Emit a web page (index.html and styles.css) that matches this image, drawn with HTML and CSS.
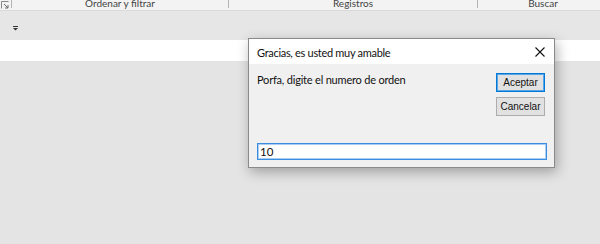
FILE: index.html
```html
<!DOCTYPE html>
<html lang="es">
<head>
<meta charset="utf-8">
<title>Gracias</title>
<link rel="stylesheet" href="styles.css">
</head>
<body>
<div class="app">
  <div class="groups">
    <div class="launcher">
      <svg width="8" height="8" viewBox="0 0 8 8"><path d="M0.5 7.5V0.5H7.5" fill="none" stroke="#8a8a8a" stroke-width="1"/><path d="M3 3L7 7M4 7H7V4" fill="none" stroke="#6d6d6d" stroke-width="1"/></svg>
    </div>
    <div class="sep"></div>
    <div class="group">Ordenar y filtrar</div>
    <div class="sep"></div>
    <div class="group">Registros</div>
    <div class="sep"></div>
    <div class="group">Buscar</div>
  </div>
  <div class="qat">
    <svg class="qat-icon" width="5" height="5" viewBox="0 0 5 5"><path d="M0 0.5H5" stroke="#333" stroke-width="1"/><path d="M0 2H5L2.5 4.5Z" fill="#333"/></svg>
  </div>
  <div class="band"></div>
  <div class="work"></div>

  <div class="dialog">
    <div class="titlebar">
      <span class="title">Gracias, es usted muy amable</span>
      <svg class="close" width="10" height="10" viewBox="0 0 10 10"><path d="M0.5 0.5L9.5 9.5M9.5 0.5L0.5 9.5" stroke="#111" stroke-width="1.1"/></svg>
    </div>
    <div class="body">
      <div class="top">
        <div class="prompt">Porfa, digite el numero de orden</div>
        <div class="buttons">
          <button class="btn default">Aceptar</button>
          <button class="btn">Cancelar</button>
        </div>
      </div>
      <div class="field"><span class="value">10</span></div>
    </div>
  </div>
</div>
</body>
</html>
```
FILE: styles.css
```css
html, body {
  margin: 0;
  padding: 0;
}
body {
  width: 600px;
  height: 244px;
  overflow: hidden;
  font-family: Lato, "Noto Sans", sans-serif;
  background: #e4e4e4;
}
.app {
  position: relative;
  width: 600px;
  height: 244px;
  display: flex;
  flex-direction: column;
}
.groups {
  height: 10px;
  background: #f3f3f3;
  display: grid;
  grid-template-columns: 11px 1px 216px 1px 248px 1px 130px;
  overflow: hidden;
  border-bottom: 1px solid #dadada;
}
.launcher {
  padding: 1px 0 0 1px;
  line-height: 0;
}
.sep {
  background: #b4b4b4;
  height: 8px;
}
.group {
  font-size: 10px;
  line-height: 11px;
  margin-top: -2px;
  color: #444;
  text-align: center;
  white-space: nowrap;
}
.qat {
  height: 29px;
  background: #e6e6e6;
  display: flex;
  align-items: center;
  padding-left: 13px;
}
.qat-icon {
  margin-top: 5px;
}
.band {
  height: 21px;
  background: #ffffff;
}
.work {
  flex: 1;
  background: #e4e4e4;
}
.dialog {
  position: absolute;
  left: 248px;
  top: 38px;
  width: 305px;
  height: 128px;
  border: 1px solid #8a8a8a;
  background: #f0f0f0;
  box-shadow: 2px 4px 12px rgba(0, 0, 0, 0.3);
  display: flex;
  flex-direction: column;
}
.titlebar {
  height: 25px;
  background: #ffffff;
  display: flex;
  align-items: center;
  justify-content: space-between;
  padding: 0 9px 0 8px;
}
.title {
  font-size: 11px;
  letter-spacing: -0.3px;
  color: #111;
  margin-top: 1px;
}
.body {
  flex: 1;
  display: flex;
  flex-direction: column;
  justify-content: space-between;
  padding: 9px 7px 7px 8px;
}
.top {
  display: flex;
  justify-content: space-between;
  align-items: flex-start;
}
.prompt {
  font-size: 11px;
  letter-spacing: -0.2px;
  color: #111;
  line-height: 14px;
}
.buttons {
  display: flex;
  flex-direction: column;
  gap: 5px;
  margin-right: 2px;
}
.btn {
  width: 49px;
  height: 19px;
  padding: 0;
  margin: 0;
  background: #e1e1e1;
  border: 1px solid #adadad;
  font-family: "Liberation Sans", Arial, sans-serif;
  font-size: 10px;
  color: #111;
}
.btn.default {
  border: 1px solid #0078d7;
  box-shadow: inset 0 0 0 1px #5aa5e6;
}
.field {
  height: 15px;
  background: #ffffff;
  border: 1px solid #3a8ee0;
  box-shadow: inset 0 0 0 1px #a9cdf2;
  display: flex;
  align-items: center;
  padding-left: 2px;
}
.value {
  font-size: 11.5px;
  color: #111;
}
```
